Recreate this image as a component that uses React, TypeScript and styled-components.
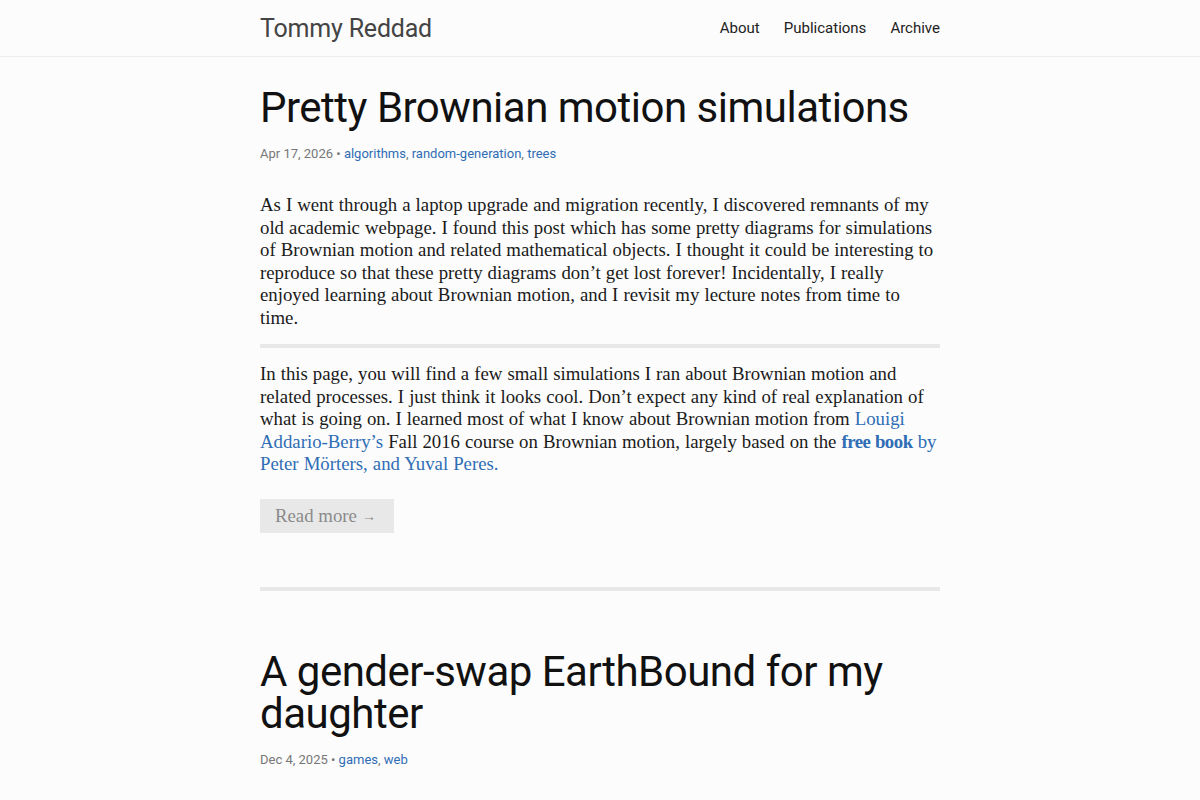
import React from "react";
import styled, { createGlobalStyle } from "styled-components";

const GlobalStyle = createGlobalStyle`
  html, body { margin: 0; padding: 0; background: #fcfcfc; }
  body { color: #1a1a1a; }
  a { text-decoration: none; }
`;

const sans = `Roboto, "Noto Sans", sans-serif`;
const serif = `"Liberation Serif", "DejaVu Serif", serif`;

const Header = styled.header`
  height: 56px;
  border-bottom: 1px solid #ececec;
  background: #fcfcfc;
`;

const HeaderInner = styled.div`
  width: 680px;
  margin: 0 auto;
  height: 100%;
  display: flex;
  align-items: center;
  justify-content: space-between;
`;

const SiteTitle = styled.a`
  font-family: ${sans};
  font-size: 25px;
  font-weight: 400;
  color: #444;
  letter-spacing: -0.2px;
`;

const Nav = styled.nav`
  display: flex;
  gap: 24px;
`;

const NavLink = styled.a`
  font-family: ${sans};
  font-size: 15px;
  color: #222;
`;

const Main = styled.main`
  width: 680px;
  margin: 0 auto;
  padding-top: 30px;
`;

const Post = styled.article`
  display: flex;
  flex-direction: column;
`;

const PostTitle = styled.h1`
  margin: 0;
  font-family: ${sans};
  font-weight: 400;
  font-size: 42px;
  line-height: 42px;
  color: #111;
  letter-spacing: -0.5px;
`;

const Meta = styled.div`
  margin-top: 17px;
  font-family: ${sans};
  font-size: 13px;
  color: #777;
`;

const Tag = styled.a`
  color: #2f6db5;
`;

const Para = styled.p`
  margin: 0;
  font-family: ${serif};
  font-size: 18.8px;
  line-height: 22.5px;
  word-spacing: 0.35px;
  color: #1a1a1a;
`;

const Body = styled.div`
  margin-top: 33px;
  display: flex;
  flex-direction: column;
`;

const Rule = styled.hr<{ $above: number; $below: number }>`
  border: none;
  height: 4px;
  background: #e8e8e8;
  margin: ${(p) => p.$above}px 0 ${(p) => p.$below}px;
`;

const TextLink = styled.a<{ $bold?: boolean }>`
  color: #2f6db5;
  font-weight: ${(p) => (p.$bold ? 700 : 400)};
  letter-spacing: ${(p) => (p.$bold ? "-0.5px" : "0")};
`;

const ReadMore = styled.a`
  align-self: flex-start;
  display: flex;
  align-items: center;
  gap: 5px;
  height: 34px;
  margin-top: 23px;
  background: #e8e8e8;
  color: #8a8a8a;
  font-family: ${serif};
  font-size: 18.8px;
  padding: 0 18px 0 15px;
`;

const Arrow = styled.span`
  font-size: 14px;
  line-height: 1;
  padding-top: 3px;
`;

export default function App() {
  return (
    <>
      <GlobalStyle />
      <Header>
        <HeaderInner>
          <SiteTitle href="#">Tommy Reddad</SiteTitle>
          <Nav>
            <NavLink href="#">About</NavLink>
            <NavLink href="#">Publications</NavLink>
            <NavLink href="#">Archive</NavLink>
          </Nav>
        </HeaderInner>
      </Header>
      <Main>
        <Post>
          <PostTitle>Pretty Brownian motion simulations</PostTitle>
          <Meta>
            Apr 17, 2026 • <Tag href="#">algorithms</Tag>, <Tag href="#">random-generation</Tag>,{" "}
            <Tag href="#">trees</Tag>
          </Meta>
          <Body>
            <Para>
              As I went through a laptop upgrade and migration recently, I discovered remnants of my
              old academic webpage. I found this post which has some pretty diagrams for simulations
              of Brownian motion and related mathematical objects. I thought it could be interesting
              to reproduce so that these pretty diagrams don’t get lost forever! Incidentally, I really
              enjoyed learning about Brownian motion, and I revisit my lecture notes from time to
              time.
            </Para>
            <Rule $above={15} $below={15} />
            <Para>
              In this page, you will find a few small simulations I ran about Brownian motion and
              related processes. I just think it looks cool. Don’t expect any kind of real explanation of
              what is going on. I learned most of what I know about Brownian motion from{" "}
              <TextLink href="#">Louigi Addario-Berry’s</TextLink> Fall 2016 course on Brownian motion,
              largely based on the <TextLink href="#" $bold>free book</TextLink>{" "}
              <TextLink href="#">by Peter Mörters, and Yuval Peres.</TextLink>
            </Para>
            <ReadMore href="#">
              Read more <Arrow>→</Arrow>
            </ReadMore>
          </Body>
        </Post>
        <Rule $above={54} $below={60} />
        <Post>
          <PostTitle>A gender-swap EarthBound for my daughter</PostTitle>
          <Meta>
            Dec 4, 2025 • <Tag href="#">games</Tag>, <Tag href="#">web</Tag>
          </Meta>
        </Post>
      </Main>
    </>
  );
}
